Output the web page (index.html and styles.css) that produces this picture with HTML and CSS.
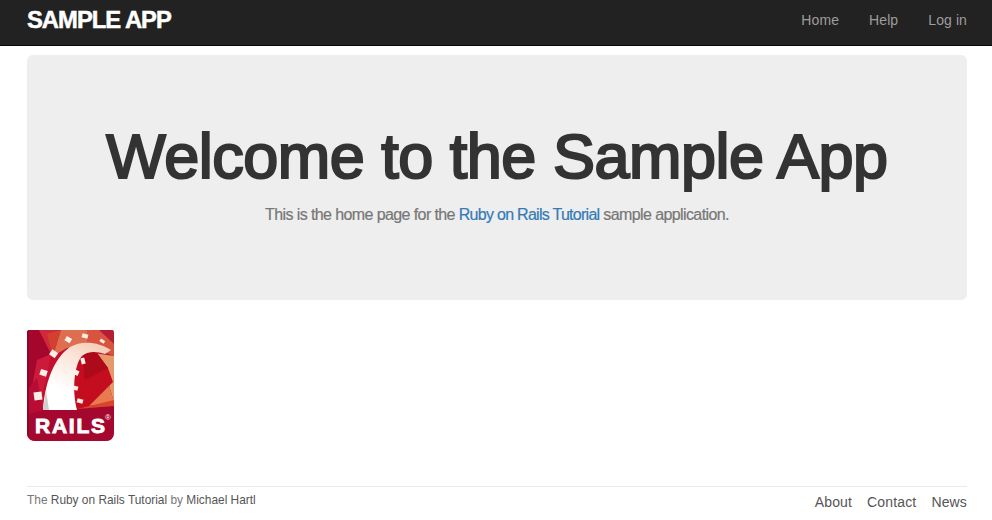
FILE: index.html
```html
<!DOCTYPE html>
<html lang="en">
<head>
<meta charset="utf-8">
<title>Sample App</title>
<link rel="stylesheet" href="styles.css">
</head>
<body>
<header class="navbar">
  <div class="container navbar-inner">
    <a class="logo" href="#">SAMPLE APP</a>
    <nav class="nav">
      <a href="#">Home</a>
      <a href="#">Help</a>
      <a href="#">Log in</a>
    </nav>
  </div>
</header>
<main class="container">
  <section class="jumbotron">
    <h1>Welcome to the Sample App</h1>
    <h2>This is the home page for the <a href="#">Ruby on Rails Tutorial</a> sample application.</h2>
  </section>
  <a class="rails-link" href="#">
    <svg class="rails" width="87" height="111" viewBox="0 0 87 111" role="img" aria-label="Rails logo">
      <defs>
        <linearGradient id="arch" x1="0.75" y1="0" x2="0.25" y2="1">
          <stop offset="0" stop-color="#f5cdb8"/>
          <stop offset="0.3" stop-color="#fbe6da"/>
          <stop offset="0.75" stop-color="#ffffff"/>
        </linearGradient>
        <clipPath id="badge"><path d="M3 0 H84 Q87 0 87 3 V102 Q87 111 78 111 H9 Q0 111 0 102 V3 Q0 0 3 0 Z"/></clipPath>
      </defs>
      <g clip-path="url(#badge)">
        <rect width="87" height="111" fill="#c4102f"/>
        <polygon points="0,0 12,0 24,24 10,48 0,60" fill="#a5062c"/>
        <polygon points="12,0 40,0 28,24 24,24" fill="#cf2a3c"/>
        <polygon points="34,0 60,0 60,16 40,18 26,26" fill="#dd6f50"/>
        <polygon points="20,4 34,0 26,26" fill="#d2402f"/>
        <polygon points="60,0 87,0 87,26 60,16" fill="#d9543e"/>
        <polygon points="72,0 87,0 87,14" fill="#b51d34"/>
        <polygon points="10,30 24,24 20,44 14,70 4,62" fill="#cc1a3a"/>
        <polygon points="0,60 10,48 16,80 0,84" fill="#b80c34"/>
        <polygon points="60,22 87,26 87,72 78,42" fill="#e59a6c"/>
        <polygon points="78,42 87,72 62,76" fill="#e77a4e"/>
        <path d="M47 44 C48 34 50 28 55 25 C60 22 66 21 70 23 L81 38 L86 52 L62 76 L50 79 C46 66 46 54 47 44 Z" fill="#c40d1f"/>
        <path d="M55 25 C60 22 66 21 70 23 L81 38 L58 50 Z" fill="#ad0a1c"/>
        <polygon points="50,79 87,70 87,78 40,87" fill="#d9452c"/>
        <polygon points="0,84 16,80 50,79 87,76 87,111 0,111" fill="#a4082f"/>
        <rect x="0" y="0" width="2" height="111" fill="#8f0527"/>
        <path d="M16 80 C18 54 26 29 43 17 C55 10 72 12 84 20 L78 24 C70 21 60 21 55 26 C47 35 45 60 50 80 Z" fill="url(#arch)"/>
        <polygon points="16,80 19,60 22,80" fill="#cfcfcf"/>
        <g fill="#fdeee8">
          <rect x="7" y="62" width="8" height="8" transform="rotate(-8 11 66)"/>
          <rect x="13" y="40" width="7" height="6" transform="rotate(18 17 43)"/>
          <rect x="23" y="21" width="7" height="6" transform="rotate(35 27 24)"/>
          <rect x="38" y="7" width="6" height="5" transform="rotate(30 41 10)"/>
          <rect x="55" y="4" width="6" height="4" transform="rotate(15 58 6)"/>
          <rect x="73" y="10" width="5" height="3" transform="rotate(35 76 11)"/>
          <rect x="54" y="28" width="4" height="6" transform="rotate(-15 56 31)"/>
          <rect x="47" y="40" width="5" height="5" transform="rotate(25 49 42)"/>
          <rect x="46" y="56" width="5" height="4" transform="rotate(15 48 58)"/>
          <rect x="50" y="69" width="6" height="4" transform="rotate(15 53 71)"/>
        </g>
        <text class="rails-word" x="8" y="103" textLength="70" lengthAdjust="spacing">RAILS</text>
        <text class="rails-mark" x="78" y="90">®</text>
      </g>
    </svg>
  </a>
  <footer class="footer">
    <small>The <a href="#">Ruby on Rails Tutorial</a> by <a href="#">Michael Hartl</a></small>
    <nav class="footer-nav">
      <a href="#">About</a>
      <a href="#">Contact</a>
      <a href="#">News</a>
    </nav>
  </footer>
</main>
</body>
</html>
```

FILE: styles.css
```css
* { box-sizing: border-box; }

html, body { margin: 0; padding: 0; }

body {
  font-family: "Liberation Sans", Arial, sans-serif;
  font-size: 14px;
  line-height: 20px;
  color: #333;
  background: #fff;
  overflow: hidden;
}

a { text-decoration: none; }

.container { padding: 0 25px 0 27px; }

.navbar {
  height: 46px;
  background: #222;
  border-bottom: 1px solid #080808;
}

.navbar-inner {
  display: flex;
  justify-content: space-between;
  align-items: center;
  height: 45px;
}

.logo {
  position: relative;
  top: -3px;
  font-size: 23.8px;
  font-weight: bold;
  letter-spacing: -1px;
  color: #fff;
  text-transform: uppercase;
  -webkit-text-stroke: 0.5px #fff;
}

.nav { display: flex; gap: 30px; position: relative; top: -3px; }

.nav a { color: #9d9d9d; font-size: 14px; letter-spacing: 0.1px; }

.jumbotron {
  height: 245px;
  margin-top: 9px;
  padding-top: 67px;
  background: #eee;
  border-radius: 6px;
  text-align: center;
}

h1 {
  margin: 0;
  font-size: 63px;
  line-height: 68px;
  font-weight: 400;
  letter-spacing: -0.5px;
  color: #333;
  -webkit-text-stroke: 2.2px #333;
}

h2 {
  margin: 15px 0 0;
  font-size: 16px;
  line-height: 20px;
  font-weight: 400;
  letter-spacing: -0.6px;
  color: #777;
  -webkit-text-stroke: 0.2px #777;
}

h2 a { color: #337ab7; letter-spacing: -0.72px; -webkit-text-stroke: 0.2px #337ab7; }

.rails-link { display: block; width: 87px; height: 111px; margin-top: 30px; }

.rails { display: block; }

.rails-word {
  font-family: "Liberation Sans", Arial, sans-serif;
  font-size: 21px;
  font-weight: bold;
  fill: #fff;
  stroke: #fff;
  stroke-width: 0.9px;
}

.rails-mark { font-size: 8px; fill: #fff; font-family: "Liberation Sans", Arial, sans-serif; }

.footer {
  display: flex;
  justify-content: space-between;
  margin-top: 45px;
  padding-top: 5px;
  border-top: 1px solid #eaeaea;
  color: #777;
}

.footer small { font-size: 11.9px; line-height: 16px; }

.footer a { color: #555; }

.footer-nav { display: flex; gap: 15px; line-height: 20px; }

.footer-nav a { font-size: 14px; letter-spacing: 0.15px; }
```
